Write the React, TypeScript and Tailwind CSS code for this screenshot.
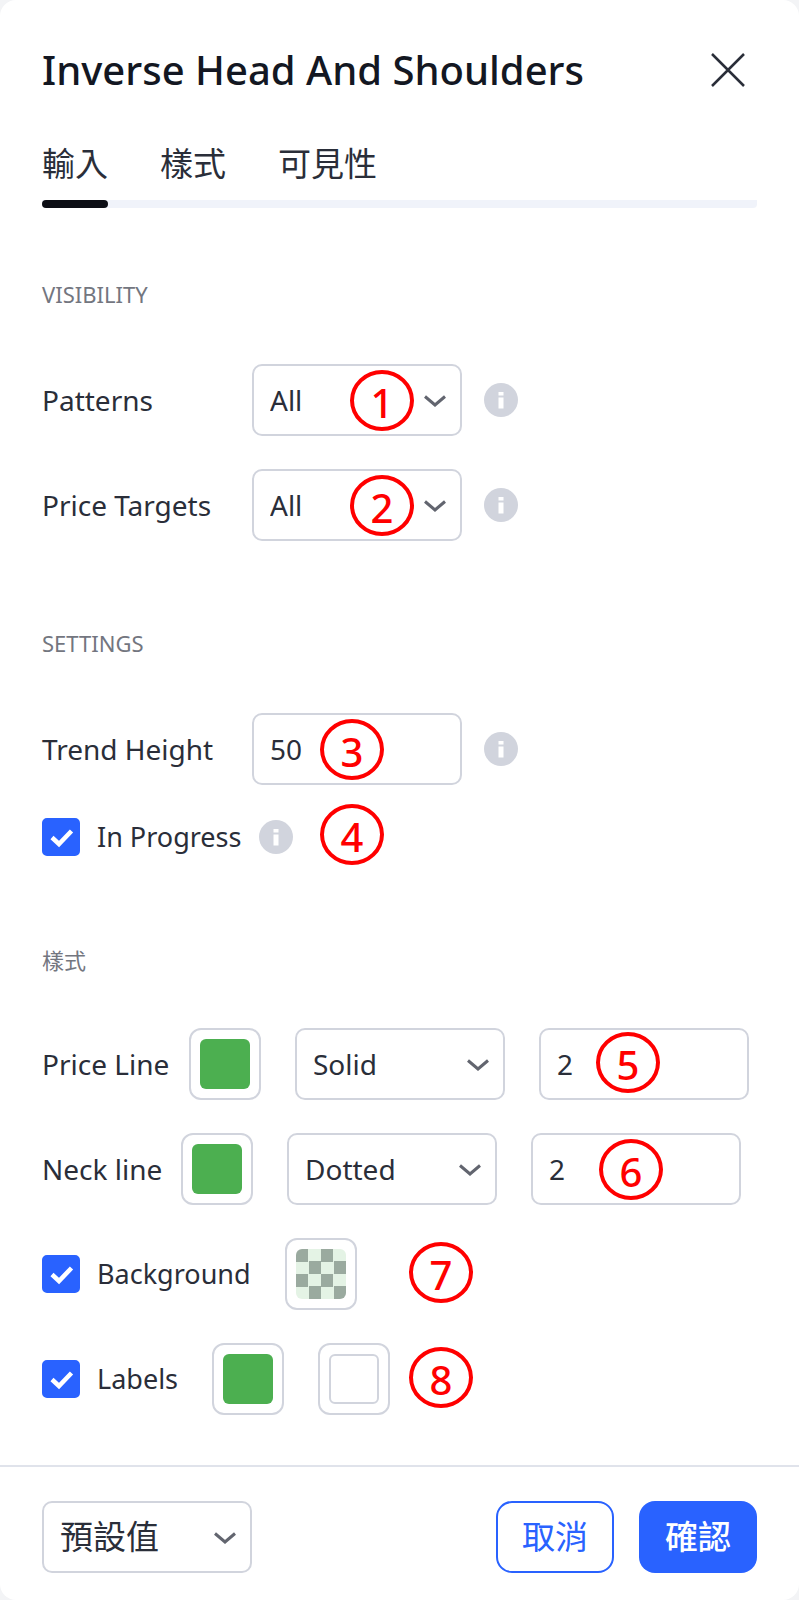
import React, { useState } from "react";
import clsx from "clsx";

const tabs = ["輸入", "樣式", "可見性"];

const fieldClass =
  "h-[72px] w-[210px] appearance-none rounded-[10px] border-2 border-[#d1d4dd] bg-white px-4 outline-none";

interface BadgeProps {
  value: number;
  className: string;
}

const Badge = ({ value, className }: BadgeProps) => (
  <span
    className={clsx(
      "pointer-events-none absolute flex h-[61px] w-16 items-center justify-center rounded-[50%] border-4 border-[#ff0000] pt-1 text-[40px] leading-none font-medium text-[#ff0000]",
      className
    )}
  >
    {value}
  </span>
);

const InfoIcon = () => (
  <svg className="size-[34px] shrink-0" viewBox="0 0 34 34" aria-hidden="true">
    <circle cx="17" cy="17" r="17" fill="#d1d4dd" />
    <path fill="#fff" d="M14.5 9h5v3.5h-5zM14.5 14.5h5v11h-5z" />
  </svg>
);

interface SelectProps {
  id: string;
  label?: string;
  options: string[];
  className?: string;
}

const Select = ({ id, label, options, className }: SelectProps) => (
  <div className="relative shrink-0">
    <select
      id={id}
      aria-label={label}
      className={clsx(fieldClass, className || "text-[28px]")}
    >
      {options.map((v) => (
        <option key={v}>{v}</option>
      ))}
    </select>
    <svg
      className="pointer-events-none absolute top-[31px] right-4 h-3 w-[22px]"
      viewBox="0 0 22 12"
      fill="none"
      stroke="#62656f"
      strokeWidth="3"
      aria-hidden="true"
    >
      <path d="M1 1.5l10 8.5 10-8.5" />
    </svg>
  </div>
);

interface CheckboxProps {
  id: string;
  label: string;
}

const Checkbox = ({ id, label }: CheckboxProps) => (
  <label htmlFor={id} className="flex items-center gap-[17px] text-[27px]">
    <span className="relative size-[38px] shrink-0">
      <input
        id={id}
        type="checkbox"
        defaultChecked
        className="peer block size-[38px] appearance-none rounded-[5px] border-2 border-[#d1d4dd] checked:border-[#2962ff] checked:bg-[#2962ff]"
      />
      <svg
        className="pointer-events-none absolute inset-0 hidden size-[38px] peer-checked:block"
        viewBox="0 0 38 38"
        fill="none"
        stroke="#fff"
        strokeWidth="4.5"
        aria-hidden="true"
      >
        <path d="M10 19.5l7 6.5 12.5-13" />
      </svg>
    </span>
    {label}
  </label>
);

interface SwatchProps {
  label: string;
  fill: string;
}

const Swatch = ({ label, fill }: SwatchProps) => (
  <button
    type="button"
    aria-label={label}
    className="flex size-[72px] shrink-0 items-center justify-center rounded-xl border-2 border-[#d1d4dd]"
  >
    <span className={clsx("size-[50px] rounded-md", fill)} />
  </button>
);

const SectionTitle = ({ children }: { children: React.ReactNode }) => (
  <h2 className="text-[22px] leading-8 text-[#73767f]">{children}</h2>
);

const green = "bg-[#4caf50]";
const checker =
  "bg-[conic-gradient(#e4f3e5_25%,#9aaa9f_0_50%,#e4f3e5_0_75%,#9aaa9f_0)] bg-size-[25px_25px]";
const lineStyles = ["Solid", "Dotted", "Dashed"];

export default () => {
  const [active, setActive] = useState(tabs[0]);

  return (
    <div className="bg-[#f3f4f6]">
      <div className="rounded-2xl bg-white font-['Noto_Sans','Noto_Sans_CJK_TC',sans-serif] text-[28px] leading-9 text-[#2a2e39]">
        <header className="flex items-center justify-between px-[42px] pt-10">
          <h1 className="text-[40px] leading-[60px] font-medium text-[#131722]">
            Inverse Head And Shoulders
          </h1>
          <button type="button" aria-label="Close" className="mr-3">
            <svg
              className="size-[34px]"
              viewBox="0 0 34 34"
              fill="none"
              stroke="#2a2e39"
              strokeWidth="2.5"
            >
              <path d="M1 1l32 32M33 1L1 33" />
            </svg>
          </button>
        </header>

        <nav className="mx-[42px] mt-9 flex gap-[52px] rounded bg-[linear-gradient(#f0f3fa,#f0f3fa)] bg-size-[100%_8px] bg-bottom bg-no-repeat">
          {tabs.map((v) => (
            <button
              key={v}
              type="button"
              onClick={() => setActive(v)}
              className="flex flex-col text-[33px] leading-[56px] text-[#2a2e39]"
            >
              {v}
              <span
                className={clsx(
                  "mt-2 h-2 w-full rounded",
                  active === v && "bg-[#0c0e15]"
                )}
              />
            </button>
          ))}
        </nav>

        <main className="px-[42px] pt-[70px] pb-[50px]">
          <section>
            <SectionTitle>VISIBILITY</SectionTitle>
            <div className="mt-[54px] flex flex-col gap-[33px]">
              <div className="relative flex items-center">
                <label htmlFor="patterns" className="w-[210px]">
                  Patterns
                </label>
                <Select id="patterns" options={["All"]} />
                <Badge value={1} className="top-1.5 left-[308px]" />
                <span className="ml-[22px]">
                  <InfoIcon />
                </span>
              </div>
              <div className="relative flex items-center">
                <label htmlFor="targets" className="w-[210px]">
                  Price Targets
                </label>
                <Select id="targets" options={["All"]} />
                <Badge value={2} className="top-1.5 left-[308px]" />
                <span className="ml-[22px]">
                  <InfoIcon />
                </span>
              </div>
            </div>
          </section>

          <section className="mt-[86px]">
            <SectionTitle>SETTINGS</SectionTitle>
            <div className="relative mt-[54px] flex items-center">
              <label htmlFor="height" className="w-[210px]">
                Trend Height
              </label>
              <input
                id="height"
                defaultValue="50"
                className={clsx(fieldClass, "text-[28px]")}
              />
              <Badge value={3} className="top-1.5 left-[278px]" />
              <span className="ml-[22px]">
                <InfoIcon />
              </span>
            </div>
            <div className="relative mt-[33px] flex items-center gap-[18px]">
              <Checkbox id="progress" label="In Progress" />
              <InfoIcon />
              <Badge value={4} className="-top-3.5 left-[278px]" />
            </div>
          </section>

          <section className="mt-[88px]">
            <SectionTitle>樣式</SectionTitle>
            <div className="mt-[52px] flex flex-col gap-[33px]">
              <div className="relative flex items-center gap-[34px]">
                <div className="flex items-center">
                  <label htmlFor="price-style" className="w-[147px]">
                    Price Line
                  </label>
                  <Swatch label="Price line color" fill={green} />
                </div>
                <Select id="price-style" options={lineStyles} />
                <input
                  aria-label="Price line width"
                  defaultValue="2"
                  className={clsx(fieldClass, "text-[28px]")}
                />
                <Badge value={5} className="top-1 left-[554px]" />
              </div>
              <div className="relative flex items-center gap-[34px]">
                <div className="flex items-center">
                  <label htmlFor="neck-style" className="w-[139px]">
                    Neck line
                  </label>
                  <Swatch label="Neck line color" fill={green} />
                </div>
                <Select id="neck-style" options={["Dotted", "Solid", "Dashed"]} />
                <input
                  aria-label="Neck line width"
                  defaultValue="2"
                  className={clsx(fieldClass, "text-[28px]")}
                />
                <Badge value={6} className="top-1.5 left-[557px]" />
              </div>
              <div className="relative flex items-center gap-[34px]">
                <Checkbox id="background" label="Background" />
                <Swatch label="Background color" fill={checker} />
                <Badge value={7} className="top-1 left-[367px]" />
              </div>
              <div className="relative flex items-center gap-[34px]">
                <Checkbox id="labels" label="Labels" />
                <Swatch label="Label color" fill={green} />
                <Swatch
                  label="Label text color"
                  fill="border-2 border-[#d1d4dd] bg-white"
                />
                <Badge value={8} className="top-1 left-[367px]" />
              </div>
            </div>
          </section>
        </main>

        <footer className="flex items-center border-t-2 border-[#e0e3eb] px-[42px] pt-[34px] pb-[27px]">
          <Select
            id="preset"
            label="Preset"
            options={["預設值"]}
            className="text-[33px]"
          />
          <button
            type="button"
            className="ml-auto h-[72px] w-[118px] rounded-2xl border-2 border-[#2962ff] text-[33px] text-[#2962ff]"
          >
            取消
          </button>
          <button
            type="button"
            className="ml-[25px] h-[72px] w-[118px] rounded-2xl bg-[#2962ff] text-[33px] font-medium text-white"
          >
            確認
          </button>
        </footer>
      </div>
    </div>
  );
};
